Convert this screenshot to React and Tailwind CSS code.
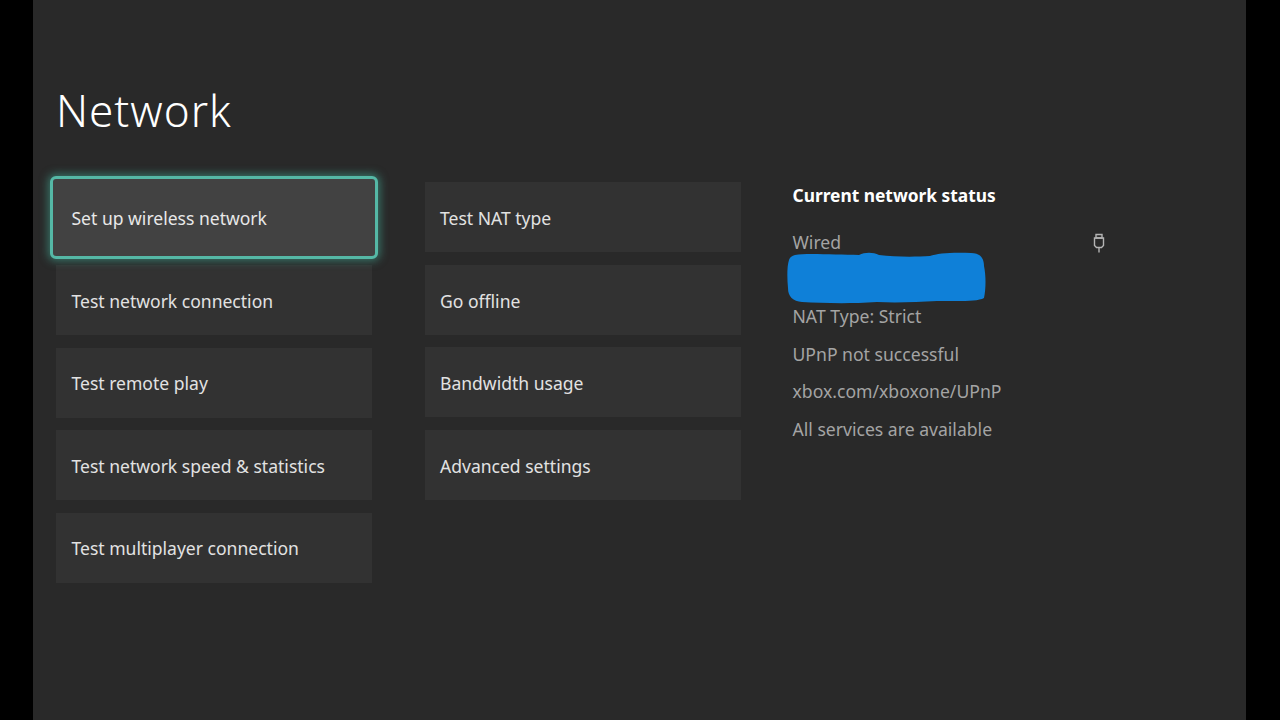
const left = ["Test network connection", "Test remote play", "Test network speed & statistics", "Test multiplayer connection"];
const mid = ["Test NAT type", "Go offline", "Bandwidth usage", "Advanced settings"];
const status = ["NAT Type: Strict", "UPnP not successful", "xbox.com/xboxone/UPnP", "All services are available"];

function Tile({ label }) {
  return (
    <div className="flex h-[70px] items-center bg-[#323232] pl-[15.5px] text-[17.55px] text-[#e2e2e2]">
      <span className="relative top-[1px]">{label}</span>
    </div>
  );
}

function EthernetIcon() {
  return (
    <svg className="relative top-[1px]" width="12" height="20" viewBox="0 0 12 20" fill="none" stroke="#b4b4b4" strokeWidth="1.4">
      <path d="M3 1.5h6v3.5H3z" />
      <path d="M1.5 5h9v7.5l-2 2h-5l-2-2z" />
      <path d="M6 14.5V19.5" />
      <path d="M4.8 3h0.1M7.1 3h0.1" />
    </svg>
  );
}

function Scribble() {
  return (
    <svg className="-ml-[6px] block" width="200" height="52" viewBox="0 0 200 52">
      <path
        fill="#0f80d8"
        d="M8 3 C20 1 50 3 72 3 C78 0 86 0 92 3 C108 5 128 5 143 4 C150 1 168 0 184 1 C193 1 197 6 197 14 C199 24 199 36 197 46 C190 50 170 49 150 49 C130 50 110 51 90 50 C60 52 35 51 15 50 C6 49 1 45 1 36 C0 26 0 14 2 8 C3 5 5 4 8 3 Z"
      />
    </svg>
  );
}

export default function App() {
  return (
    <div className="flex h-[720px] w-[1280px] overflow-hidden bg-black font-['Noto_Sans',sans-serif]">
      <div className="ml-[33px] h-full w-[1213px] bg-[#292929] pl-[23px]">
        <h1 className="pt-[80px] text-[44px] leading-[60px] font-light tracking-[1px] text-white">Network</h1>
        <div className="mt-[42px] flex items-start">
          <div className="flex w-[316px] flex-col gap-[12.5px]">
            <div className="relative -mx-[6px] -mt-[6px] -mb-[6.5px] flex h-[83px] items-center rounded-[6px] border-[3px] border-[#55b8a6] bg-[#424242] pl-[18.5px] text-[17.55px] text-[#e8e8e8] shadow-[0_0_8px_2px_rgba(70,190,165,0.5)]">
              <span className="relative top-[1px]">Set up wireless network</span>
            </div>
            {left.map((t) => <Tile key={t} label={t} />)}
          </div>
          <div className="mt-[0.3px] ml-[52.5px] flex w-[316px] flex-col gap-[12.5px]">
            {mid.map((t) => <Tile key={t} label={t} />)}
          </div>
          <div className="ml-[52px] flex w-[312px] flex-col">
            <div className="-mt-[1px] text-[17.35px] leading-[28px] font-bold text-white">Current network status</div>
            <div className="mt-[19px] flex h-[28px] items-center justify-between text-[17.6px] text-[#a4a4a4]">
              <span>Wired</span>
              <EthernetIcon />
            </div>
            <div className="-mt-[4px]"><Scribble /></div>
            <div className="-mt-[2px] flex flex-col gap-[9.5px] text-[17.6px] leading-[28px] text-[#a4a4a4]">
              {status.map((t) => <div key={t}>{t}</div>)}
            </div>
          </div>
        </div>
      </div>
    </div>
  );
}
